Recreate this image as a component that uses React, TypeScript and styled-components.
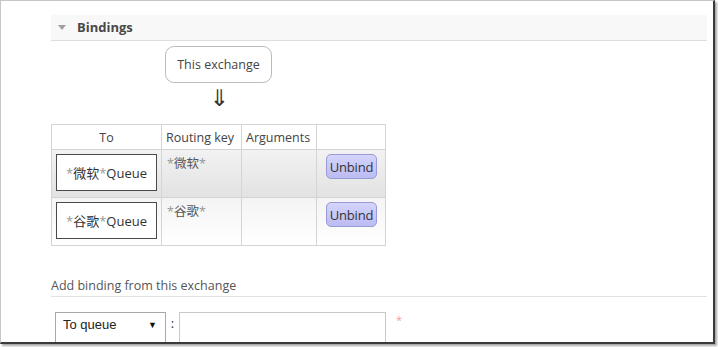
import React from "react";
import styled, { createGlobalStyle } from "styled-components";

const Global = createGlobalStyle`
  html, body { margin: 0; padding: 0; background: #ffffff; }
  body { font-family: "Open Sans", "Noto Sans CJK SC", sans-serif; }
`;

const Outer = styled.div`
  width: 718px;
  height: 347px;
  overflow: hidden;
  background: #ffffff;
`;

const Frame = styled.div`
  box-sizing: border-box;
  width: 715px;
  height: 344px;
  border-top: 1px solid #c6c6c6;
  border-left: 1px solid #c6c6c6;
  border-right: 2px solid #3a3a3a;
  border-bottom: 2px solid #3a3a3a;
  box-shadow: 2px 2px 2px rgba(0, 0, 0, 0.35);
  padding: 14px 6px 0 50px;
  overflow: hidden;
  background: #fff;
`;

const SectionHeader = styled.div`
  height: 25px;
  background: #f8f8f8;
  border-bottom: 1px solid #dddddd;
  display: flex;
  align-items: center;
  padding-left: 7px;
  gap: 11px;
`;

const Triangle = styled.span`
  width: 0;
  height: 0;
  border-left: 4px solid transparent;
  border-right: 4px solid transparent;
  border-top: 5px solid #a0a0a0;
`;

const SectionTitle = styled.span`
  font-size: 13px;
  font-weight: 700;
  color: #484848;
  margin-top: -2px;
`;

const Source = styled.div`
  margin-left: 114px;
  margin-top: 5px;
  width: 107px;
  display: flex;
  flex-direction: column;
  align-items: center;
`;

const ExchangeBox = styled.div`
  box-sizing: border-box;
  width: 107px;
  height: 37px;
  border: 1px solid #bcbcbc;
  border-radius: 9px;
  display: flex;
  align-items: center;
  justify-content: center;
  font-size: 12.5px;
  color: #444;
`;

const Arrow = styled.div`
  font-family: "DejaVu Sans", sans-serif;
  font-size: 23px;
  line-height: 26px;
  height: 26px;
  color: #333;
  margin-top: 2px;
  margin-left: 2px;
`;

const Table = styled.table`
  margin-top: 13px;
  border-collapse: collapse;
  font-size: 12.5px;
  color: #444;
`;

const Th = styled.th<{ $w: number; $center?: boolean }>`
  width: ${(p) => p.$w}px;
  height: 25px;
  padding: 0 4px;
  box-sizing: border-box;
  border: 1px solid #d4d4d4;
  font-weight: 400;
  text-align: ${(p) => (p.$center ? "center" : "left")};
  background: #fff;
  color: #444;
  white-space: nowrap;
`;

const Tr = styled.tr<{ $alt?: boolean }>`
  height: 48px;
  background: ${(p) =>
    p.$alt
      ? "linear-gradient(#f4f4f4, #ffffff)"
      : "linear-gradient(#f2f2f2, #e2e2e2)"};
`;

const Td = styled.td<{ $center?: boolean }>`
  border: 1px solid #d4d4d4;
  vertical-align: top;
  padding: 4px 4px;
  text-align: ${(p) => (p.$center ? "center" : "left")};
`;

const KeyCell = styled(Td)`
  padding: 3px 5px;
  color: #555;
`;

const Star = styled.span`
  color: #999;
`;

const QueueBox = styled.div`
  box-sizing: border-box;
  width: 101px;
  height: 37px;
  background: #fff;
  border: 1px solid #4a4a4a;
  display: flex;
  align-items: center;
  justify-content: center;
  font-size: 13px;
  color: #333;
`;

const UnbindButton = styled.button`
  margin-top: 0px;
  margin-left: 1px;
  height: 25px;
  padding: 0 3px;
  border: 1px solid #9a9ad6;
  border-radius: 5px;
  background: linear-gradient(#d4d4fc, #bcbcf4);
  font-family: "Open Sans", sans-serif;
  font-size: 13px;
  letter-spacing: -0.2px;
  color: #333;
`;

const SubHeading = styled.div`
  margin-top: 31px;
  padding-bottom: 2px;
  border-bottom: 1px solid #e2e2e2;
  font-size: 12.5px;
  color: #555;
`;

const FormRow = styled.div`
  display: flex;
  align-items: flex-start;
  margin-top: 15px;
  margin-left: 4px;
`;

const Select = styled.div`
  box-sizing: border-box;
  width: 111px;
  height: 32px;
  border: 1px solid #a8a8a8;
  display: flex;
  align-items: flex-start;
  justify-content: space-between;
  padding: 4px 8px 0 7px;
  line-height: 16px;
  font-family: "Liberation Sans", Arial, sans-serif;
  font-size: 13px;
  color: #222;
`;

const Caret = styled.span`
  font-size: 9px;
  color: #111;
`;

const Colon = styled.span`
  width: 13px;
  text-align: center;
  font-size: 13px;
  line-height: 22px;
  color: #333;
`;

const Input = styled.div`
  box-sizing: border-box;
  width: 207px;
  height: 32px;
  border: 1px solid #c8c8c8;
`;

const Required = styled.span`
  margin-left: 10px;
  margin-top: 0px;
  font-size: 11px;
  color: #f29aa8;
`;

const rows = [
  { name: "微软", alt: false },
  { name: "谷歌", alt: true },
];

export default function App() {
  return (
    <Outer>
      <Global />
      <Frame>
        <SectionHeader>
          <Triangle />
          <SectionTitle>Bindings</SectionTitle>
        </SectionHeader>
        <Source>
          <ExchangeBox>This exchange</ExchangeBox>
          <Arrow>⇓</Arrow>
        </Source>
        <Table>
          <thead>
            <tr>
              <Th $w={110} $center>To</Th>
              <Th $w={80}>Routing key</Th>
              <Th $w={75}>Arguments</Th>
              <Th $w={69} />
            </tr>
          </thead>
          <tbody>
            {rows.map((r) => (
              <Tr key={r.name} $alt={r.alt}>
                <Td>
                  <QueueBox>
                    <Star>*</Star>
                    {r.name}
                    <Star>*</Star>Queue
                  </QueueBox>
                </Td>
                <KeyCell>
                  <Star>*</Star>
                  {r.name}
                  <Star>*</Star>
                </KeyCell>
                <Td />
                <Td $center>
                  <UnbindButton>Unbind</UnbindButton>
                </Td>
              </Tr>
            ))}
          </tbody>
        </Table>
        <SubHeading>Add binding from this exchange</SubHeading>
        <FormRow>
          <Select>
            <span>To queue</span>
            <Caret>▼</Caret>
          </Select>
          <Colon>:</Colon>
          <Input />
          <Required>*</Required>
        </FormRow>
      </Frame>
    </Outer>
  );
}
